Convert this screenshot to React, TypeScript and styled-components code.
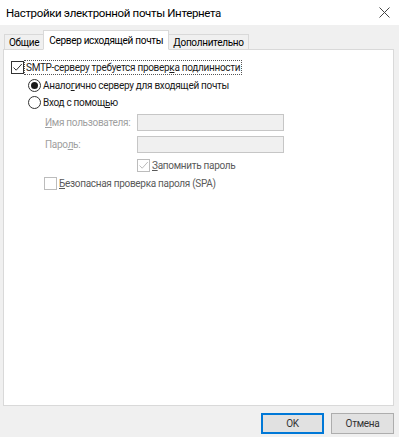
import * as React from "react";
import styled, { createGlobalStyle } from "styled-components";

const GlobalStyle = createGlobalStyle`
  html, body {
    margin: 0;
    padding: 0;
    background: #f0f0f0;
  }
  body {
    font-family: Roboto, "Segoe UI", sans-serif;
    font-size: 10px;
    letter-spacing: -0.3px;
    color: #1a1a1a;
  }
`;

const Dialog = styled.div`
  width: 399px;
  height: 437px;
  display: flex;
  flex-direction: column;
  background: #f0f0f0;
  overflow: hidden;
`;

const TitleBar = styled.div`
  height: 25px;
  background: #ffffff;
  display: flex;
  align-items: center;
  justify-content: space-between;
  padding: 0 9px 0 6px;
`;

const Title = styled.div`
  font-size: 11.5px;
  letter-spacing: -0.35px;
  color: #000;
`;

const CloseButton = styled.div`
  width: 11px;
  height: 11px;
  display: flex;
`;

const TabRow = styled.div`
  display: flex;
  align-items: flex-end;
  margin-top: 6px;
  padding-left: 4px;
  height: 18px;
  position: relative;
  z-index: 1;
`;

const Tab = styled.div<{ $active?: boolean }>`
  height: ${(p) => (p.$active ? "20px" : "16px")};
  padding: 0 ${(p) => (p.$active ? "5px" : "4px")};
  margin-left: ${(p) => (p.$active ? "-1px" : "0")};
  margin-right: ${(p) => (p.$active ? "-1px" : "0")};
  background: ${(p) => (p.$active ? "#ffffff" : "#f0f0f0")};
  border: 1px solid #d9d9d9;
  border-bottom: ${(p) => (p.$active ? "1px solid #ffffff" : "1px solid #d9d9d9")};
  display: flex;
  align-items: center;
  color: #000;
  box-sizing: border-box;
  margin-bottom: -1px;
  position: relative;
  z-index: ${(p) => (p.$active ? 2 : 1)};
`;

const Panel = styled.div`
  flex: 1;
  margin: 0 5px 0 3px;
  background: #ffffff;
  border: 1px solid #d9d9d9;
  padding: 11px 0 0 7px;
  display: flex;
  flex-direction: column;
`;

const Row = styled.div<{ $indent: number; $gap?: number }>`
  display: flex;
  align-items: center;
  margin-left: ${(p) => p.$indent}px;
  margin-bottom: ${(p) => p.$gap ?? 5}px;
  height: 13px;
`;

const Box = styled.div<{ $disabled?: boolean }>`
  width: 13px;
  height: 13px;
  box-sizing: border-box;
  border: 1px solid ${(p) => (p.$disabled ? "#bcbcbc" : "#333333")};
  background: #ffffff;
  flex-shrink: 0;
  display: flex;
  align-items: center;
  justify-content: center;
`;

const Radio = styled.div<{ $checked?: boolean }>`
  width: 13px;
  height: 13px;
  box-sizing: border-box;
  border-radius: 50%;
  border: 1px solid #333333;
  background: #ffffff;
  flex-shrink: 0;
  display: flex;
  align-items: center;
  justify-content: center;
  &::after {
    content: "";
    display: ${(p) => (p.$checked ? "block" : "none")};
    width: 7px;
    height: 7px;
    border-radius: 50%;
    background: #1a1a1a;
  }
`;

const Label = styled.span<{ $tone?: "normal" | "muted"; $focus?: boolean }>`
  margin-left: 1px;
  padding: 0 1px;
  white-space: nowrap;
  line-height: 13px;
  color: ${(p) => (p.$tone === "muted" ? "#5a5a5a" : "#1a1a1a")};
  outline: ${(p) => (p.$focus ? "1px dotted #555" : "none")};
  outline-offset: 0px;
`;

const FieldRow = styled.div<{ $gap: number }>`
  display: flex;
  align-items: center;
  margin-left: 34px;
  margin-bottom: ${(p) => p.$gap}px;
  height: 17px;
`;

const FieldLabel = styled.span`
  width: 92px;
  color: #a0a0a0;
  white-space: nowrap;
`;

const Input = styled.div`
  width: 147px;
  height: 17px;
  box-sizing: border-box;
  border: 1px solid #c6c6c6;
  background: #f0f0f0;
`;

const Footer = styled.div`
  height: 31px;
  display: flex;
  justify-content: flex-end;
  align-items: flex-start;
  gap: 7px;
  padding: 7px 5px 0 0;
  box-sizing: border-box;
`;

const Button = styled.div<{ $primary?: boolean }>`
  width: 63px;
  height: 21px;
  box-sizing: border-box;
  border: 1px solid ${(p) => (p.$primary ? "#0078d7" : "#adadad")};
  box-shadow: ${(p) => (p.$primary ? "inset 0 0 0 1px #0078d7" : "none")};
  background: #e1e1e1;
  display: flex;
  align-items: center;
  justify-content: center;
  color: #333;
`;

const Check: React.FC<{ color: string }> = ({ color }) => (
  <svg width="11" height="11" viewBox="0 0 11 11">
    <path d="M1.5 5.5 L4.2 8.2 L9.8 2" fill="none" stroke={color} strokeWidth="1" />
  </svg>
);

export default function App() {
  return (
    <>
      <GlobalStyle />
      <Dialog>
        <TitleBar>
          <Title>Настройки электронной почты Интернета</Title>
          <CloseButton>
            <svg width="11" height="11" viewBox="0 0 11 11">
              <path d="M0.5 0.5 L10.5 10.5 M10.5 0.5 L0.5 10.5" stroke="#444" strokeWidth="1" />
            </svg>
          </CloseButton>
        </TitleBar>
        <TabRow>
          <Tab>Общие</Tab>
          <Tab $active>Сервер исходящей почты</Tab>
          <Tab>Дополнительно</Tab>
        </TabRow>
        <Panel>
          <Row $indent={0}>
            <Box>
              <Check color="#333" />
            </Box>
            <Label $focus>
              SMTP-серверу требуется провер<u>к</u>а подлинности
            </Label>
          </Row>
          <Row $indent={17} $gap={4}>
            <Radio $checked />
            <Label>
              Анало<u>г</u>ично серверу для входящей почты
            </Label>
          </Row>
          <Row $indent={17}>
            <Radio />
            <Label>
              Вход с помощ<u>ь</u>ю
            </Label>
          </Row>
          <FieldRow $gap={5}>
            <FieldLabel>
              <u>И</u>мя пользователя:
            </FieldLabel>
            <Input />
          </FieldRow>
          <FieldRow $gap={6}>
            <FieldLabel>
              Паро<u>л</u>ь:
            </FieldLabel>
            <Input />
          </FieldRow>
          <Row $indent={126}>
            <Box $disabled>
              <Check color="#bcbcbc" />
            </Box>
            <Label $tone="muted">
              <u>З</u>апомнить пароль
            </Label>
          </Row>
          <Row $indent={33}>
            <Box $disabled />
            <Label $tone="muted">
              <u>Б</u>езопасная проверка пароля (SPA)
            </Label>
          </Row>
        </Panel>
        <Footer>
          <Button $primary>OK</Button>
          <Button>Отмена</Button>
        </Footer>
      </Dialog>
    </>
  );
}
